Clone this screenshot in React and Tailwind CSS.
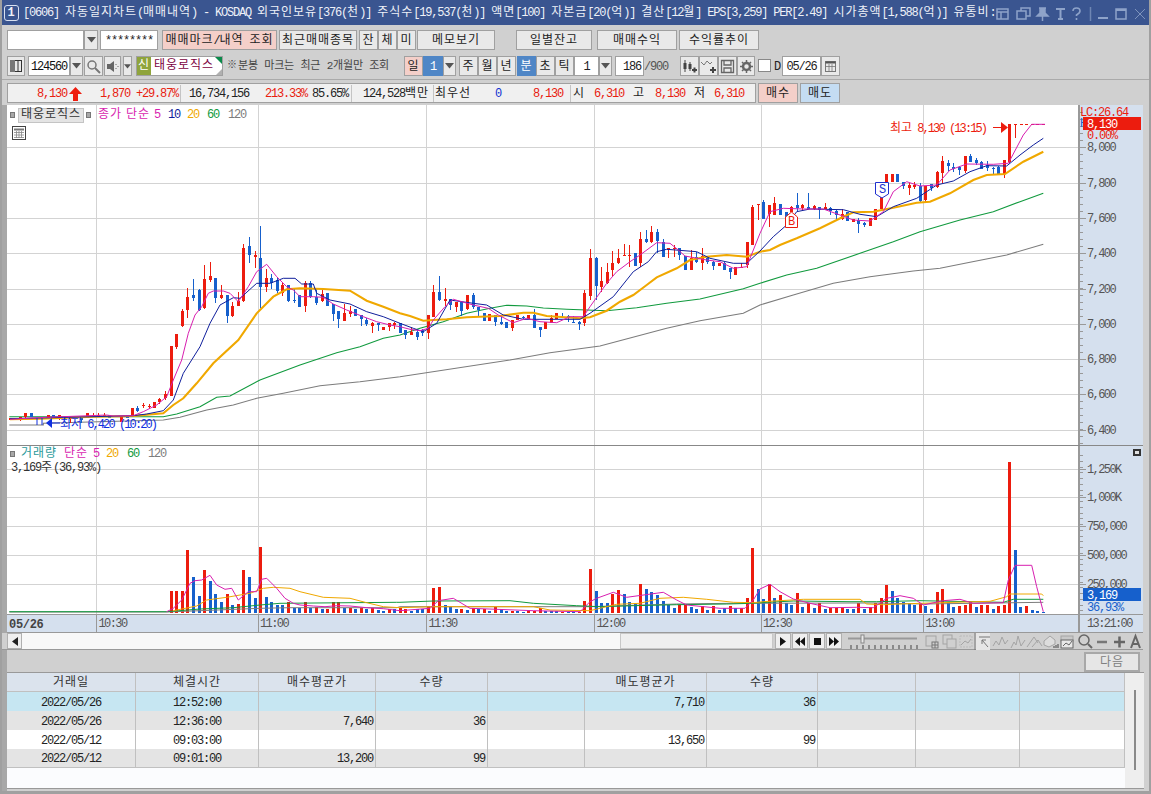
import React from "react";

const Txt = ({ children }) => (
  <>
    {String(children)
      .split(/([가-힣]+)/)
      .map((s, i) =>
        /[가-힣]/.test(s) ? (
          <span key={i}>{s}</span>
        ) : (
          <span key={i} className="tracking-[-1.2px]">{s}</span>
        )
      )}
  </>
);

const RED = "#ec1c0e";
const BLUE = "#1660cc";
const PINK = "#d81fb0";
const NAVY = "#101f9c";
const ORANGE = "#f0a800";
const GREEN = "#119a3e";
const GRAY = "#7c7c7c";

const z3 = (a) => a.map(([x, y]) => [x / 3, 130 + y / 3]);
const z4 = (a) => a.map(([x, y]) => [400 + x / 3, 200 + y / 3]);
const z5 = (a) => a.map(([x, y]) => [760 + x / 3, 105 + y / 3]);
const v6 = (a) => a.map(([x, y]) => [x / 3, 540 + y / 3]);
const v10 = (a) => a.map(([x, y]) => [400 + x / 3, 540 + y / 3]);
const v7 = (a) => a.map(([x, y]) => [760 + x / 3, 530 + y / 3]);
const pts = (a) => a.map(([x, y]) => `${x.toFixed(1)},${y.toFixed(1)}`).join(" ");

const pinkP = [...z3([[30,868],[140,862],[320,855],[340,858],[400,857],[430,845],[470,825],[500,800],[520,750],[545,690],[565,610],[585,555],[605,530],[625,490],[640,483],[670,483],[690,490],[715,515],[745,470],[770,425],[800,403],[830,440],[860,470],[880,480],[900,500],[940,500],[970,502],[1000,522],[1040,540],[1090,560],[1130,575],[1170,585]]),
  ...z4([[0,380],[30,388],[60,392],[85,385],[100,360],[135,320],[160,298],[185,305],[220,315],[265,325],[295,345],[340,368],[380,355],[420,365],[470,368],[510,350],[550,350],[570,320],[620,250],[650,215],[690,185],[720,165],[770,128],[810,130],[835,150],[855,168],[920,180],[960,185],[1000,205],[1040,200]]),
  ...z5([[0,385],[30,320],[70,310],[130,312],[190,312],[240,330],[280,345],[330,348],[370,320],[400,260],[440,230],[480,243],[530,240],[570,195],[620,177],[700,178],[745,175],[790,90],[815,58],[855,58]])];
const navyP = [...z3([[30,866],[400,857],[440,852],[490,842],[520,810],[550,730],[600,650],[630,580],[660,525],[700,503],[720,505],[770,460],[810,460],[850,445],[885,445],[905,462],[940,462],[950,490],[990,510],[1050,522],[1100,545],[1150,560]]),
  ...z4([[0,370],[40,385],[70,395],[110,370],[150,300],[220,310],[260,315],[310,345],[370,358],[450,358],[540,358],[570,340],[640,290],[700,215],[745,185],[770,155],[800,148],[890,155],[930,175],[1000,190],[1040,190]]),
  ...z5([[0,438],[40,395],[80,360],[110,320],[150,312],[250,314],[300,328],[350,335],[400,305],[470,280],[530,240],[580,228],[630,200],[680,182],[740,183],[780,150],[820,120],[850,100]])];
const orangeP = [...z3([[30,868],[120,866],[280,860],[400,858],[490,850],[520,825],[550,805],[590,760],[640,700],[715,630],[770,550],[820,500],[860,478],[900,475],[970,477],[1050,482],[1100,512],[1150,530]]),
  ...z4([[0,340],[30,348],[70,362],[100,360],[140,358],[200,352],[300,348],[370,338],[400,338],[440,348],[540,355],[570,352],[620,332],[660,305],[700,285],[740,255],[770,232],[830,205],[870,180],[920,170],[980,165],[1040,170]]),
  ...z5([[0,440],[30,435],[60,420],[110,400],[180,370],[250,335],[280,322],[340,320],[400,308],[470,293],[510,290],[570,265],[640,225],[680,210],[735,207],[790,170],[850,140]])];
const greenP = [...z3([[28,860],[490,860],[530,852],[600,830],[650,802],[690,798],[780,750],[900,705],[1010,668],[1080,650],[1150,625]]),
  ...z4([[0,405],[60,385],[130,365],[200,340],[270,325],[320,316],[380,318],[430,324],[500,328],[620,332],[710,323],[800,310],[900,297],[1030,266]]),
  ...z5([[0,535],[80,510],[170,490],[300,445],[400,410],[480,380],[600,345],[700,320],[780,290],[850,265]])];
const grayP = [...z3([[28,885],[130,885],[130,880],[490,870],[540,862],[620,840],[700,825],[770,805],[850,790],[960,767],[1080,755],[1200,740]]),
  ...z4([[330,480],[450,458],[600,438],[800,385],[900,362],[1030,340]]),
  ...z5([[0,600],[100,570],[220,535],[330,515],[460,498],[540,490],[630,472],[740,450],[850,418]])];

const c3 = [[30,"r",865,865,872,872],[45,"r",865,865,872,872],[60,"r",860,862,870,872],[76,"r",850,850,862,872],[94,"b",850,850,862,862],[143,"r",856,856,866,866],[160,"b",856,856,866,866],[178,"r",856,856,866,872],[193,"b",862,862,868,868],[210,"r",862,864,868,880],[243,"b",865,865,872,880],[262,"r",850,850,866,866],[278,"r",850,856,859,862],[295,"r",850,856,859,862],[313,"r",850,854,857,860],[328,"b",855,855,865,865],[362,"r",857,857,875,875],[380,"b",855,855,865,865],[397,"r",834,834,862,862],[412,"b",828,835,843,845],[430,"r",820,826,830,835],[446,"r",822,828,832,838],[463,"r",815,815,833,833],[478,"r",803,806,816,820],[496,"r",782,793,805,810],[513,"r",648,648,798,798],[529,"r",612,612,652,656],[547,"r",537,543,588,592],[562,"r",475,500,540,565],[580,"b",447,495,505,512],[598,"b",478,480,540,545],[613,"r",405,447,533,538],[631,"r",396,437,450,455],[646,"b",444,444,503,518],[664,"r",465,495,505,508],[682,"b",495,495,557,578],[697,"r",516,528,558,560],[715,"r",487,514,530,530],[730,"r",343,354,513,518],[748,"b",321,348,376,398],[766,"r",363,375,381,413],[781,"b",288,384,470,533],[799,"r",418,444,470,488],[814,"b",432,444,458,477],[832,"b",445,450,482,490],[847,"r",455,465,488,497],[865,"b",465,465,513,517],[883,"b",473,510,514,518],[898,"b",495,495,530,530],[916,"r",453,460,530,545],[931,"b",453,460,503,505],[949,"b",475,500,518,525],[967,"r",475,492,512,518],[982,"b",490,490,530,530],[1000,"b",522,522,552,572],[1015,"b",543,543,567,593],[1033,"r",522,549,572,572],[1051,"r",528,543,552,560],[1066,"b",538,538,558,558],[1084,"b",555,555,567,587],[1099,"b",565,570,582,590],[1117,"r",575,578,586,607],[1135,"b",578,580,587,603],[1150,"r",590,590,598,598],[1168,"r",578,580,592,602],[1183,"r",575,580,586,595]];
const c4 = [[0,"b",368,368,398,398],[15,"b",390,390,404,418],[33,"r",380,396,404,404],[51,"b",390,395,410,420],[67,"b",388,390,398,410],[85,"r",345,345,398,418],[100,"r",255,275,350,350],[118,"b",228,276,300,302],[136,"r",265,297,303,320],[151,"b",297,297,316,330],[169,"r",306,306,322,335],[184,"b",306,306,332,348],[202,"r",285,285,328,330],[220,"b",280,285,322,328],[235,"b",320,320,330,350],[253,"b",338,338,362,362],[268,"r",342,342,362,362],[286,"b",346,346,368,378],[304,"b",350,366,372,375],[319,"b",365,365,384,384],[337,"r",360,360,384,392],[352,"r",346,346,362,362],[370,"b",348,352,354,358],[385,"r",345,345,358,358],[403,"b",327,345,383,383],[421,"b",380,380,388,410],[436,"r",367,367,388,388],[454,"r",345,353,368,368],[469,"r",340,340,358,358],[487,"b",340,350,353,355],[505,"b",345,349,355,366],[520,"b",348,365,367,370],[538,"b",362,365,370,390],[553,"r",270,280,370,378],[571,"r",148,175,290,300],[589,"b",170,175,260,300],[604,"r",200,243,262,275],[622,"r",190,216,250,252],[637,"r",153,190,212,232],[655,"r",147,175,190,192],[673,"r",133,165,168,170],[688,"r",135,165,168,200],[706,"b",160,160,198,198],[721,"r",97,118,190,203],[739,"b",90,118,128,128],[754,"r",78,95,125,128],[772,"b",87,97,125,158],[790,"b",118,125,170,172],[805,"r",145,145,152,175],[823,"r",135,143,146,170],[838,"b",145,145,167,182],[856,"b",167,167,210,210],[874,"r",150,175,210,210],[889,"b",155,172,188,188],[907,"r",145,168,188,210],[922,"b",172,175,188,192],[940,"b",183,185,198,210],[958,"r",188,188,198,198],[973,"b",185,188,208,210],[991,"b",205,205,218,237],[1006,"r",202,202,225,225],[1024,"r",190,202,204,205],[1042,"r",127,127,197,204],[1057,"r",15,22,135,135],[1075,"r",12,12,15,60]];
const c5 = [[10,"b",285,290,340,340],[28,"r",300,300,328,365],[43,"r",277,293,328,328],[61,"b",297,297,330,330],[79,"b",320,320,335,335],[94,"r",303,305,320,325],[112,"b",265,300,310,320],[127,"r",297,300,310,317],[145,"b",265,307,312,312],[163,"r",300,302,310,315],[178,"b",305,305,313,342],[196,"r",293,305,310,312],[211,"b",307,310,320,330],[229,"b",315,318,330,345],[247,"r",313,327,342,345],[262,"b",322,322,350,350],[280,"r",342,342,350,350],[295,"b",340,345,358,385],[313,"b",350,355,362,365],[331,"r",338,338,362,362],[346,"r",312,312,345,345],[364,"r",275,275,310,310],[379,"r",207,207,270,270],[397,"r",207,207,232,232],[412,"b",207,207,232,232],[430,"b",230,232,245,250],[448,"r",233,240,250,268],[463,"r",230,240,245,250],[481,"b",233,243,288,290],[496,"r",243,243,285,292],[514,"b",237,237,250,258],[532,"r",198,200,245,250],[547,"r",152,168,205,232],[565,"b",165,175,183,197],[580,"b",173,185,190,200],[598,"b",183,187,197,210],[616,"r",153,153,198,205],[631,"b",147,152,170,172],[649,"b",158,165,173,178],[664,"b",167,170,190,192],[682,"b",168,180,190,197],[700,"b",185,190,193,205],[715,"b",182,185,208,208],[733,"r",165,165,207,218],[748,"r",57,57,172,175],[766,"r",57,57,59,98],[784,"r",57,57,59,59],[799,"r",57,57,59,59],[817,"r",57,57,59,59],[832,"r",57,57,59,59],[850,"r",57,57,59,59]];

const candles = [
  ...c3.map(([x, c, a, b, d, e]) => [x / 3, c, 130 + a / 3, 130 + b / 3, 130 + d / 3, 130 + e / 3]),
  ...c4.map(([x, c, a, b, d, e]) => [400 + x / 3, c, 200 + a / 3, 200 + b / 3, 200 + d / 3, 200 + e / 3]),
  ...c5.map(([x, c, a, b, d, e]) => [760 + x / 3, c, 105 + a / 3, 105 + b / 3, 105 + d / 3, 105 + e / 3]),
];

const vols = [
  ...[[513,"r",153],[529,"r",153],[547,"r",153],[562,"r",30],[580,"b",111],[598,"b",168],[613,"r",90],[631,"b",123],[646,"b",162],[664,"b",186],[682,"r",162],[697,"b",195],[715,"r",192],[730,"r",90],[748,"b",111],[766,"b",174],[781,"r",21],[799,"b",171],[814,"b",186],[832,"b",195],[847,"b",195],[865,"r",186],[883,"b",204],[898,"b",204],[916,"r",186],[931,"b",204],[949,"r",200],[967,"b",207],[982,"r",207],[1000,"r",186],[1015,"r",186],[1033,"b",204],[1051,"r",204],[1066,"b",207],[1084,"r",204],[1099,"b",207],[1117,"r",204],[1135,"b",210],[1150,"b",213],[1168,"r",208],[1183,"b",208]].map(([x, c, y]) => [x / 3, c, 540 + y / 3]),
  ...[[0,"r",205],[15,"r",207],[33,"b",213],[51,"b",208],[67,"b",208],[85,"r",198],[100,"r",144],[118,"r",141],[136,"b",195],[151,"b",200],[169,"b",207],[184,"r",207],[202,"b",210],[220,"r",203],[235,"b",208],[253,"r",208],[268,"b",212],[286,"r",202],[304,"b",208],[319,"b",213],[337,"r",212],[352,"b",212],[370,"b",215],[385,"r",210],[403,"r",212],[421,"r",203],[436,"b",212],[454,"b",212],[469,"b",212],[487,"r",215],[505,"b",215],[520,"b",215],[538,"r",215],[553,"r",183],[571,"r",87],[589,"b",153],[604,"b",189],[622,"b",189],[637,"r",162],[655,"r",150],[673,"b",162],[688,"b",186],[706,"b",192],[721,"r",132],[739,"b",147],[754,"b",156],[772,"b",165],[790,"b",183],[805,"b",195],[823,"b",204],[838,"r",195],[856,"r",192],[874,"b",200],[889,"b",207],[907,"r",198],[922,"b",210],[940,"r",198],[958,"b",210],[973,"b",205],[991,"r",198],[1006,"b",205],[1024,"r",204],[1042,"r",174],[1057,"r",24],[1075,"b",147]].map(([x, c, y]) => [400 + x / 3, c, 540 + y / 3]),
  ...[[10,"b",207],[28,"r",163],[43,"b",204],[61,"r",195],[79,"b",220],[94,"b",225],[112,"r",189],[127,"b",232],[145,"r",218],[163,"b",235],[178,"r",220],[196,"b",237],[211,"r",233],[229,"r",233],[247,"r",233],[262,"b",237],[280,"b",237],[295,"r",218],[313,"b",237],[331,"r",232],[346,"r",220],[364,"r",204],[379,"r",165],[397,"b",183],[412,"b",204],[430,"b",216],[448,"b",220],[463,"b",225],[481,"r",218],[496,"b",228],[514,"b",237],[532,"r",186],[547,"r",177],[565,"b",215],[580,"b",232],[598,"r",228],[616,"r",225],[631,"r",215],[649,"b",232],[664,"r",226],[682,"r",226],[700,"b",237],[715,"r",228],[733,"r",225],[748,"r",-204],[766,"b",60],[781,"b",232],[799,"r",228],[817,"b",240],[832,"b",243],[850,"b",246]].map(([x, c, y]) => [760 + x / 3, c, 530 + y / 3]),
];

const vPink = [...v6([[500,215],[520,205],[545,180],[570,130],[585,122],[605,120],[630,106],[650,135],[675,148],[695,145],[715,180],[745,155],[770,155],[785,118],[800,115],[830,145],[855,175],[880,190],[900,195],[940,198],[975,200],[1010,197],[1050,198],[1100,203],[1150,206]]),
  ...v10([[0,212],[90,205],[115,182],[160,175],[210,205],[400,212],[540,215],[570,185],[590,175],[640,157],[680,172],[790,157],[830,180],[860,195],[960,205],[1035,205],[1060,180]]),
  ...v7([[0,177],[30,163],[60,185],[100,207],[150,220],[210,233],[290,232],[340,233],[380,205],[420,197],[460,205],[490,225],[550,212],[600,208],[640,220],[730,218],[745,150],[765,106],[815,106],[830,170],[850,245]])];
const vOrange = [...v6([[520,212],[590,198],[620,180],[680,172],[750,160],[790,145],[820,142],[870,145],[900,155],[970,172],[1050,175],[1100,188],[1150,200]]),
  ...v10([[0,203],[100,200],[400,200],[450,210],[570,212],[650,193],[720,190],[780,175],[850,172],[920,178],[1000,187],[1060,188]]),
  ...v7([[10,215],[130,208],[300,208],[320,222],[370,224],[480,220],[690,214],[740,200],[750,192],[845,192],[850,197]])];
const vGreen = [...v6([[28,215],[500,215],[600,207],[700,203],[780,195],[840,190],[1190,187]]),
  ...v10([[0,187],[100,183],[330,182],[400,190],[530,197],[600,200],[700,197],[830,194],[980,192],[1060,190]]),
  ...v7([[0,218],[100,213],[270,215],[350,215],[480,212],[730,217],[760,208],[850,208]])];
const vGray = [...v6([[28,216],[500,216],[600,212],[780,205],[870,203],[1190,203]]),
  ...v10([[0,200],[570,200],[830,192],[1060,189]]),
  ...v7([[0,220],[270,219],[350,219],[490,222],[850,217]])];

const priceY = [147.3, 182.5, 218, 253.3, 288.5, 323.8, 359, 394.3, 429.5];
const priceL = ["8,000", "7,800", "7,600", "7,400", "7,200", "7,000", "6,800", "6,600", "6,400"];
const grid = [96.5, 258, 426.5, 594.5, 761, 923.5];
const volY = [469, 497, 526, 555, 584];
const volL = ["1,250K", "1,000K", "750,000", "500,000", "250,000"];
const MONO = "font-['Liberation_Mono','Noto_Sans_CJK_KR',monospace] text-[12px] tracking-[-1.2px]";
const AXIS = "font-['Liberation_Mono','Noto_Sans_CJK_KR',monospace] text-[12px] tracking-[-1.6px]";
const MARK = "font-['Liberation_Mono','Noto_Sans_CJK_KR',monospace] text-[12px] tracking-[-1.9px]";

function PricePane() {
  const minor = [];
  for (let y = 112; y < 445; y += 7.05) minor.push(y);
  return (
    <svg width="1136" height="340" viewBox="7 105 1136 340" className="block">
      <rect x="7" y="105" width="1136" height="340" fill="#ffffff" />
      <rect x="1078" y="105" width="65" height="340" fill="#d5e0ee" />
      <g shapeRendering="crispEdges" stroke="#d3d3d3">
        {priceY.map((y) => <line key={y} x1="7" x2="1078" y1={Math.round(y) + 0.5} y2={Math.round(y) + 0.5} />)}
        {grid.map((x) => <line key={x} x1={x} x2={x} y1="105" y2="445" />)}
      </g>
      <g shapeRendering="crispEdges" stroke="#999999">
        <line x1="1078.5" x2="1078.5" y1="105" y2="445" />
        <line x1="1079.5" x2="1079.5" y1="105" y2="445" />
        {minor.map((y) => <line key={y} x1="1079" x2="1083" y1={Math.round(y) + 0.5} y2={Math.round(y) + 0.5} />)}
        {priceY.map((y) => <line key={y} x1="1079" x2="1086" y1={Math.round(y) + 0.5} y2={Math.round(y) + 0.5} />)}
      </g>
      <polyline points={pts(grayP)} fill="none" stroke={GRAY} strokeWidth="1.1" />
      <polyline points={pts(greenP)} fill="none" stroke={GREEN} strokeWidth="1.1" />
      <g shapeRendering="crispEdges">
        {candles.map(([x, c, a, b, d, e], i) => {
          const px = Math.round(x);
          const col = c === "r" ? RED : BLUE;
          return (
            <g key={i} fill={col}>
              <rect x={px} y={Math.round(a)} width="1" height={Math.max(1, Math.round(e - a))} />
              <rect x={px - 1} y={Math.round(b)} width="3" height={Math.max(1, Math.round(d - b))} />
            </g>
          );
        })}
      </g>
      <polyline points={pts(orangeP)} fill="none" stroke={ORANGE} strokeWidth="2.1" />
      <polyline points={pts(navyP)} fill="none" stroke={NAVY} strokeWidth="1" />
      <polyline points={pts(pinkP)} fill="none" stroke={PINK} strokeWidth="1" />

      <text x="890" y="131.500" fill={RED} className={MARK}>
        <tspan className="tracking-[-0.1px]">최고</tspan>
        <tspan> 8,130 (13:15)</tspan>
      </text>
      <path d="M993 127.500H1002" stroke={RED} strokeWidth="1" />
      <path d="M1001 122L1008 127.500L1001 133Z" fill={RED} />

      <path d="M37 418V425M42 418V425" stroke="#1030e0" strokeWidth="1" />
      <path d="M46 423L52 418V428Z" fill="#1030e0" />
      <path d="M52 423H60" stroke="#1030e0" strokeWidth="1" />
      <text x="60" y="427.500" fill="#1030e0" className={MARK}>
        <tspan className="tracking-[-0.1px]">최저</tspan>
        <tspan> 6,420 (10:20)</tspan>
      </text>

      <path d="M785.5 227.5V217L791.5 212L797.5 217V227.5Z" fill="#ffffff" stroke={RED} />
      <text x="788" y="225" fill={RED} className={MONO}>B</text>
      <path d="M875.5 182.5H888.5V194L882 198L875.5 194Z" fill="#ffffff" stroke="#2030d0" />
      <text x="879" y="193" fill="#2030d0" className={MONO}>S</text>

      <g fill="#555555" className={AXIS}>
        {priceY.map((y, i) => <text key={y} x="1087" y={y + 4}>{priceL[i]}</text>)}
      </g>
      <text x="1080" y="116" fill={RED} className={MONO}>LC:26.64</text>
      <text x="1080" y="127" fill={BLUE} className={MONO}>H</text>
      <rect x="1083" y="117" width="58" height="13" fill={RED} shapeRendering="crispEdges" />
      <text x="1087" y="127.5" fill="#ffffff" className={MONO}>8,130</text>
      <text x="1087" y="139" fill={RED} className={MONO}>0.00%</text>
    </svg>
  );
}

function VolumePane() {
  const minor = [];
  for (let y = 455; y < 613; y += 5.75) minor.push(y);
  return (
    <svg width="1136" height="187" viewBox="7 446 1136 187" className="block">
      <rect x="7" y="446" width="1136" height="168" fill="#ffffff" />
      <rect x="1078" y="446" width="65" height="187" fill="#d5e0ee" />
      <rect x="7" y="614" width="1071" height="19" fill="#d5e0ee" />
      <g shapeRendering="crispEdges" stroke="#d3d3d3">
        {volY.map((y) => <line key={y} x1="7" x2="1078" y1={y + 0.5} y2={y + 0.5} />)}
        {grid.map((x) => <line key={x} x1={x} x2={x} y1="446" y2="614" />)}
      </g>
      <g shapeRendering="crispEdges">
        {vols.map(([x, c, y], i) => (
          <rect key={i} x={Math.round(x) - 1} y={Math.round(y)} width="3" height={Math.max(1, 613 - Math.round(y))} fill={c === "r" ? RED : BLUE} />
        ))}
      </g>
      <polyline points={pts(vGray)} fill="none" stroke={GRAY} strokeWidth="1" />
      <polyline points={pts(vGreen)} fill="none" stroke={GREEN} strokeWidth="1" />
      <polyline points={pts(vOrange)} fill="none" stroke={ORANGE} strokeWidth="1" />
      <polyline points={pts(vPink)} fill="none" stroke={PINK} strokeWidth="1" />
      <g shapeRendering="crispEdges" stroke="#999999">
        <line x1="1078.5" x2="1078.5" y1="446" y2="633" />
        <line x1="1079.5" x2="1079.5" y1="446" y2="633" />
        {minor.map((y) => <line key={y} x1="1079" x2="1083" y1={Math.round(y) + 0.5} y2={Math.round(y) + 0.5} />)}
        {volY.map((y) => <line key={y} x1="1079" x2="1086" y1={y + 0.5} y2={y + 0.5} />)}
        <line x1="7" x2="1143" y1="614.5" y2="614.5" />
        <line x1="7" x2="1143" y1="632.5" y2="632.5" />
        {grid.map((x) => <line key={x} x1={x} x2={x} y1="614" y2="632" />)}
      </g>
      <g fill="#555555" className={AXIS}>
        {volY.map((y, i) => <text key={y} x="1087" y={y + 4}>{volL[i]}</text>)}
        {["10:30", "11:00", "11:30", "12:00", "12:30", "13:00"].map((t, i) => (
          <text key={t} x={grid[i] + 2} y="627">{t}</text>
        ))}
        <text x="1087" y="627">13:21:00</text>
      </g>
      <text x="9" y="627.5" fill="#444444" fontWeight="700" className="font-['Liberation_Mono',monospace] text-[12px] tracking-[-0.3px]">05/26</text>
      <rect x="1083" y="588" width="58" height="13" fill={BLUE} shapeRendering="crispEdges" />
      <text x="1087" y="598.5" fill="#ffffff" className={MONO}>3,169</text>
      <text x="1087" y="611" fill={BLUE} className={MONO}>36,93%</text>
      <rect x="1133" y="449" width="8" height="7" fill="#333333" />
      <rect x="1135" y="451" width="4" height="3" fill="#e0e0e0" />
    </svg>
  );
}

function Btn({ className = "", bg = "bg-[#e9e9e9]", children }) {
  const isText = typeof children === "string";
  return (
    <div className={"h-full flex items-center justify-center border border-[#a0a0a0] text-[#222222] shrink-0 " + bg + " " + (isText ? "pt-[2px] " : "") + className}>
      {isText ? <span><Txt>{children}</Txt></span> : children}
    </div>
  );
}

const Caret = () => (
  <svg width="9" height="6" viewBox="0 0 9 6"><path d="M0 0H9L4.5 5.5Z" fill="#555555" /></svg>
);

const headers = ["거래일", "체결시간", "매수평균가", "수량", "", "매도평균가", "수량", "", "", ""];
const rows = [
  { bg: "bg-[#c6e6f2]", c: ["2022/05/26", "12:52:00", "", "", "", "7,710", "36", "", "", ""] },
  { bg: "bg-[#e4e4e4]", c: ["2022/05/26", "12:36:00", "7,640", "36", "", "", "", "", "", ""] },
  { bg: "bg-white", c: ["2022/05/12", "09:03:00", "", "", "", "13,650", "99", "", "", ""] },
  { bg: "bg-[#e4e4e4]", c: ["2022/05/12", "09:01:00", "13,200", "99", "", "", "", "", "", ""] },
];
const COLS = "grid grid-cols-[129px_123px_117px_112px_97px_122px_111px_98px_104px_105px]";

export default function App() {
  return (
    <div className="w-[1151px] h-[794px] overflow-hidden bg-[#d0d0d0] flex flex-col border-x-2 border-b-[3px] border-[#a0a0a0] font-['Liberation_Mono','Noto_Sans_CJK_KR',monospace] text-[12px] tracking-[0.96px] leading-none whitespace-pre text-[#222222]">
      {/* title bar */}
      <div className="h-[25px] -mx-[2px] bg-[#3a5590] flex items-center text-[#eef1f8] shrink-0">
        <div className="ml-[4px] w-[15px] h-[16px] border border-[#d8e0f0] rounded-[3px] flex items-center justify-center text-[12px] font-bold shrink-0">1</div>
        <div className="ml-[4px] w-[968px] shrink-0">
          <Txt>{"[0606] 자동일지차트(매매내역) - KOSDAQ 외국인보유[376(천)] 주식수[19,537(천)] 액면[100] 자본금[20(억)] 결산[12월] EPS[3,259] PER[2.49] 시가총액[1,588(억)] 유통비:"}</Txt>
        </div>
        <svg width="160" height="25" viewBox="991 0 160 25" className="shrink-0" fill="none" stroke="#8ea3c9" strokeWidth="1.5">
          <rect x="997" y="9" width="11" height="10" />
          <path d="M997 12H1008M1001 12V19" />
          <rect x="1021" y="8" width="9" height="8" />
          <rect x="1017" y="11" width="9" height="8" fill="#3a5590" />
          <path d="M1039 8H1046M1040 8V13L1037 16H1048L1045 13V8M1042.5 16V21" fill="#8ea3c9" />
          <path d="M1056 9H1065M1060.5 9V19M1058 19H1063" strokeWidth="2" />
          <path d="M1073 11Q1073 8 1076.5 8Q1080 8 1080 11Q1080 13 1076.5 15V16M1076.5 18V20" strokeWidth="1.6" />
          <path d="M1090.5 7V21" stroke="#6f86b3" />
          <path d="M1098 18H1108" strokeWidth="2" />
          <rect x="1116" y="9" width="10" height="10" />
          <path d="M1116 10H1126" strokeWidth="2" />
          <path d="M1135 9L1145 19M1145 9L1135 19" stroke="#7d93bd" strokeWidth="1" />
        </svg>
      </div>

      {/* toolbar 1 */}
      <div className="h-[20px] mt-[5px] pl-[5px] flex shrink-0">
        <div className="w-[77px] h-full bg-white border border-[#a0a0a0]" />
        <Btn className="w-[14px]"><Caret /></Btn>
        <div className="ml-[2px] w-[58px] h-full bg-white border border-[#a0a0a0] flex items-center justify-center pt-[2px]"><Txt>********</Txt></div>
        <Btn className="ml-[4px] w-[115px]" bg="bg-[#f4cfc9]">{"매매마크/내역 조회"}</Btn>
        <Btn className="ml-[2px] w-[78px]">최근매매종목</Btn>
        <Btn className="ml-[2px] w-[19px]">잔</Btn>
        <Btn className="w-[19px]">체</Btn>
        <Btn className="w-[19px]">미</Btn>
        <Btn className="ml-[1px] w-[78px]">메모보기</Btn>
        <Btn className="ml-[21px] w-[76px]">일별잔고</Btn>
        <Btn className="ml-[5px] w-[80px]">매매수익</Btn>
        <Btn className="ml-[2px] w-[80px]">수익률추이</Btn>
      </div>

      {/* toolbar 2 */}
      <div className="h-[20px] mt-[6px] pl-[5px] flex shrink-0">
        <Btn className="w-[18px]">
          <svg width="14" height="14" viewBox="0 0 14 14" fill="none" stroke="#333333">
            <rect x="1.5" y="1.5" width="11" height="11" />
            <rect x="1" y="1" width="5" height="12" fill="#777777" stroke="none" />
            <path d="M9 1.5V12.5" />
          </svg>
        </Btn>
        <div className="ml-[3px] w-[42px] h-full bg-white border border-[#a0a0a0] flex items-center justify-center pt-[1px] text-[#111111]"><Txt>124560</Txt></div>
        <Btn className="w-[13px]"><Caret /></Btn>
        <Btn className="ml-[1px] w-[19px]">
          <svg width="15" height="15" viewBox="0 0 15 15" fill="none" stroke="#777777" strokeWidth="1.5">
            <circle cx="6" cy="6" r="4" />
            <path d="M9 9L14 14" strokeWidth="2" />
          </svg>
        </Btn>
        <Btn className="ml-[1px] w-[17px]">
          <svg width="14" height="13" viewBox="0 0 14 13">
            <path d="M1 4H4L8 1V12L4 9H1Z" fill="#666666" />
            <path d="M10 4V5M10 8V9M12 6V7" stroke="#666666" />
          </svg>
        </Btn>
        <Btn className="ml-[2px] w-[9px]"><svg width="7" height="5" viewBox="0 0 9 6"><path d="M0 0H9L4.5 5.5Z" fill="#555555" /></svg></Btn>
        <div className="ml-[4px] w-[87px] h-full relative bg-white border border-[#a0a0a0] flex items-center overflow-hidden">
          <div className="w-[14px] h-full bg-[#8fa43c] text-white flex items-center justify-center">신</div>
          <div className="ml-[3px] text-[#7c0040]">태웅로직스</div>
          <svg width="86" height="19" viewBox="0 0 86 19" className="absolute left-0 top-0">
            <path d="M78 0H86V8Z" fill="#0a8a4a" />
            <path d="M86 11V19H78Z" fill="#b0b0b0" />
          </svg>
        </div>
        <div className="ml-[4px] w-[177px] flex items-center text-[#444444] text-[11px] tracking-[-0.2px]">
          <span className="text-[10px] tracking-[-1px]">※</span>
          <span className="ml-[2px]">분봉 마크는 최근 2개월만 조회</span>
        </div>
        <Btn className="w-[19px]" bg="bg-[#f4cfc9]">일</Btn>
        <div className="w-[20px] h-full bg-[#4f86c6] text-white flex items-center justify-center pt-[1px]"><Txt>1</Txt></div>
        <Btn className="w-[13px]"><Caret /></Btn>
        <Btn className="ml-[3px] w-[19px]">주</Btn>
        <Btn className="w-[19px]">월</Btn>
        <Btn className="w-[19px]">년</Btn>
        <div className="ml-[1px] w-[19px] h-full bg-[#4f86c6] text-white flex items-center justify-center pt-[2px]">분</div>
        <Btn className="w-[19px]">초</Btn>
        <Btn className="w-[19px]">틱</Btn>
        <div className="w-[25px] h-full bg-white border border-[#a0a0a0] flex items-center justify-center pt-[1px]"><Txt>1</Txt></div>
        <Btn className="w-[13px]"><Caret /></Btn>
        <div className="ml-[3px] w-[29px] h-full bg-white border border-[#a0a0a0] flex items-center justify-end pr-[2px] pt-[1px]"><Txt>186</Txt></div>
        <div className="w-[36px] flex items-center text-[#555555] pt-[1px]"><Txt>/900</Txt></div>
        <Btn className="w-[19px]">
          <svg width="15" height="15" viewBox="0 0 15 15">
            <path d="M3 1V13M8 3V12" stroke="#444444" />
            <rect x="1.5" y="4" width="3" height="6" fill="#444444" />
            <rect x="6.5" y="5" width="3" height="5" fill="#444444" />
            <path d="M10 11H15M12.5 8.500V13.500" stroke="#444444" strokeWidth="2" />
          </svg>
        </Btn>
        <Btn className="w-[19px]">
          <svg width="15" height="15" viewBox="0 0 15 15" fill="none" stroke="#777777">
            <path d="M0 3L3 6L6 2L9 5L11 3" />
            <path d="M9 11H15M12 8V14" stroke="#444444" strokeWidth="2" />
          </svg>
        </Btn>
        <Btn className="w-[19px]">
          <svg width="15" height="15" viewBox="0 0 15 15" fill="none" stroke="#666666" strokeWidth="1.3">
            <path d="M1.500 1.500H13.500V13.500H1.500Z" />
            <path d="M4 1.500V6H11V1.500M4 13.500V9H11V13.500" />
          </svg>
        </Btn>
        <Btn className="w-[18px]">
          <svg width="15" height="15" viewBox="0 0 15 15">
            <circle cx="7.5" cy="7.5" r="3.5" fill="none" stroke="#666666" strokeWidth="2.500" />
            <path d="M7.500 1V14M1 7.500H14M3 3L12 12M12 3L3 12" stroke="#666666" strokeWidth="1.500" strokeDasharray="2.500 8" />
          </svg>
        </Btn>
        <div className="ml-[3px] mt-[3px] w-[13px] h-[13px] bg-white border border-[#888888]" />
        <div className="ml-[3px] w-[8px] flex items-center pt-[1px]"><Txt>D</Txt></div>
        <div className="w-[39px] h-full bg-white border border-[#a0a0a0] flex items-center justify-center pt-[1px]"><Txt>05/26</Txt></div>
        <Btn className="w-[19px]">
          <svg width="13" height="13" viewBox="0 0 13 13" fill="none" stroke="#777777">
            <rect x="1.500" y="1.500" width="10" height="10" />
            <path d="M1.500 2.500H11.500" strokeWidth="2" stroke="#555555" />
            <path d="M1.500 6.500H11.500M5 4V11.500M8 4V11.500" strokeWidth="0.800" />
          </svg>
        </Btn>
      </div>

      <div className="h-px mt-[3px] bg-[#aaaaaa] shrink-0" />

      {/* quote row */}
      <div className="h-[20px] mt-[3px] pl-[5px] flex shrink-0">
        <div className="w-[749px] h-full bg-[#f0f0f0] border border-[#a0a0a0] flex items-center pt-[1px] text-[#e8200f]">
          <span className="w-[59px] text-right"><Txt>8,130</Txt></span>
          <svg width="13" height="14" viewBox="0 0 13 14" className="ml-[2px]"><path d="M6.500 0L13 7H9V14H4V7H0Z" fill="#ee1c0e" /></svg>
          <span className="w-[48px] text-right"><Txt>1,870</Txt></span>
          <span className="w-[48px] text-right"><Txt>+29.87%</Txt></span>
          <span className="ml-[2px] h-full border-l border-[#c4c4c4]" />
          <span className="w-[68px] text-right text-[#222222]"><Txt>16,734,156</Txt></span>
          <span className="w-[58px] text-right"><Txt>213.33%</Txt></span>
          <span className="w-[41px] text-right text-[#222222]"><Txt>85.65%</Txt></span>
          <span className="ml-[3px] h-full border-l border-[#c4c4c4]" />
          <span className="w-[77px] text-right text-[#222222]"><Txt>124,528백만</Txt></span>
          <span className="ml-[4px] h-full border-l border-[#c4c4c4]" />
          <span className="ml-[1px] w-[36px] text-[#222222]">최우선</span>
          <span className="w-[30px] text-right text-[#1030d0]"><Txt>0</Txt></span>
          <span className="w-[62px] text-right"><Txt>8,130</Txt></span>
          <span className="ml-[7px] h-full border-l border-[#c4c4c4]" />
          <span className="ml-[2px] w-[12px] text-[#222222]">시</span>
          <span className="w-[39px] text-right"><Txt>6,310</Txt></span>
          <span className="ml-[9px] w-[12px] text-[#222222]">고</span>
          <span className="w-[40px] text-right"><Txt>8,130</Txt></span>
          <span className="ml-[9px] w-[12px] text-[#222222]">저</span>
          <span className="w-[38px] text-right"><Txt>6,310</Txt></span>
        </div>
        <Btn className="ml-[2px] w-[40px]" bg="bg-[#f4cfc9]">매수</Btn>
        <Btn className="ml-[2px] w-[40px]" bg="bg-[#c4dcf2]">매도</Btn>
      </div>

      {/* chart block */}
      <div className="mt-[2px] border-l-[5px] border-[#a8a8a8] shrink-0 w-[1141px] relative">
        <PricePane />
        <div className="h-px bg-[#888888]" />
        <VolumePane />

        {/* price legend */}
        <div className="absolute left-[3px] top-[3px] flex items-center h-[14px]">
          <span className="w-[5px] h-[6px] bg-[#a8a8a8] border border-[#777777]" />
          <span className="ml-[3px] w-[66px] h-[15px] bg-[#e4e4e4] border border-[#c4c4c4] flex items-center justify-center text-[#333333]">태웅로직스</span>
          <span className="ml-[2px] w-[5px] h-[6px] bg-[#a8a8a8] border border-[#777777]" />
          <span className="ml-[7px] text-[#d81fb0]">종가</span>
          <span className="ml-[4px] text-[#d81fb0]">단순</span>
          <span className="ml-[4px] text-[#d81fb0]"><Txt>5</Txt></span>
          <span className="ml-[8px] text-[#101f9c]"><Txt>10</Txt></span>
          <span className="ml-[7px] text-[#f0a800]"><Txt>20</Txt></span>
          <span className="ml-[8px] text-[#119a3e]"><Txt>60</Txt></span>
          <span className="ml-[9px] text-[#7c7c7c]"><Txt>120</Txt></span>
        </div>
        <svg width="14" height="14" viewBox="0 0 14 14" className="absolute left-[5px] top-[21px]" fill="none" stroke="#444444">
          <rect x="0.500" y="0.500" width="13" height="13" />
          <path d="M2 3.500H12" strokeWidth="2" stroke="#777777" />
          <path d="M2 6.500H12M2 9H12M2 11.500H12M4.500 5V12M7 5V12M9.500 5V12" stroke="#888888" strokeWidth="0.800" />
        </svg>

        {/* volume legend */}
        <div className="absolute left-[3px] top-[342px] flex items-center h-[14px]">
          <span className="w-[5px] h-[6px] bg-[#a8a8a8] border border-[#777777]" />
          <span className="ml-[6px] text-[#2a9a9a]">거래량</span>
          <span className="ml-[7px] text-[#d81fb0]">단순</span>
          <span className="ml-[5px] text-[#d81fb0]"><Txt>5</Txt></span>
          <span className="ml-[7px] text-[#f0a800]"><Txt>20</Txt></span>
          <span className="ml-[9px] text-[#119a3e]"><Txt>60</Txt></span>
          <span className="ml-[9px] text-[#7c7c7c]"><Txt>120</Txt></span>
        </div>
        <div className="absolute left-[4px] top-[357px] text-[#333333]"><Txt>3,169주(36,93%)</Txt></div>
      </div>

      {/* scroll + tools row */}
      <div className="h-[17px] pl-[5px] flex shrink-0 w-[1141px] border-b border-[#999999]">
        <div className="w-[15px] h-full bg-[#efefef] border border-[#b0b0b0] flex items-center justify-center">
          <svg width="6" height="9" viewBox="0 0 6 9"><path d="M6 0V9L0 4.500Z" fill="#222222" /></svg>
        </div>
        <div className="w-[598px] h-full bg-[#f8f8f8]" />
        <div className="w-[153px] h-full bg-[#efefef] border border-[#c8c8c8]" />
        <div className="ml-[2px] w-[16px] h-full bg-[#efefef] border border-[#b0b0b0] flex items-center justify-center">
          <svg width="6" height="9" viewBox="0 0 6 9"><path d="M0 0V9L6 4.500Z" fill="#111111" /></svg>
        </div>
        <div className="ml-px w-[16px] h-full bg-[#efefef] border border-[#b0b0b0] flex items-center justify-center">
          <svg width="10" height="9" viewBox="0 0 10 9"><path d="M5 0V9L0 4.500ZM10 0V9L5 4.500Z" fill="#111111" /></svg>
        </div>
        <div className="ml-px w-[16px] h-full bg-[#efefef] border border-[#b0b0b0] flex items-center justify-center">
          <span className="w-[7px] h-[7px] bg-[#111111]" />
        </div>
        <div className="ml-px w-[16px] h-full bg-[#efefef] border border-[#b0b0b0] flex items-center justify-center">
          <svg width="10" height="9" viewBox="0 0 10 9"><path d="M0 0V9L5 4.500ZM5 0V9L10 4.500Z" fill="#111111" /></svg>
        </div>
        <svg width="301" height="17" viewBox="842 633 301 17" className="shrink-0" fill="none" stroke="#a4a4a4">
          <path d="M848 638.500H917" strokeWidth="2" stroke="#999999" />
          <rect x="861" y="635" width="3" height="8" fill="#e8e8e8" stroke="#888888" />
          <path d="M851 645V649M857 645V649M863 645V649M869 645V649M875 645V649M881 645V649M887 645V649M893 645V649M899 645V649M905 645V649M911 645V649M917 645V649" stroke="#444444" />
          <rect x="926" y="636" width="10" height="10" />
          <rect x="932" y="642" width="6" height="6" fill="#d0d0d0" stroke="#777777" />
          <path d="M932 645H938M935 642V648" stroke="#777777" />
          <rect x="943" y="635" width="9" height="9" />
          <rect x="947" y="639" width="9" height="9" fill="#d0d0d0" />
          <rect x="960" y="636" width="12" height="11" strokeDasharray="2 1" stroke="#bbbbbb" />
          <path d="M961 645L965 641L968 643L971 639" />
          <path d="M975 633V650" stroke="#777777" />
          <rect x="976" y="633" width="14" height="17" fill="#e6e6e6" stroke="none" />
          <path d="M979 637H990M982 640L988 647M982 640V644M982 640H986" stroke="#777777" />
          <path d="M993 646L996 641L999 645L1002 637L1005 644L1008 640" />
          <path d="M1011 648L1014 642L1016 645L1018 636L1021 646L1025 640" />
          <path d="M1027 647L1034 637L1038 643M1032 647L1038 640L1042 646" />
          <path d="M1044 641L1050 636L1055 640V644L1049 647L1044 645Z" fill="#dddddd" />
          <path d="M1054 646V648M1056 645V648M1058 644V648" stroke="#444444" />
          <rect x="1061" y="636" width="12" height="5" fill="#c8c8c8" />
          <rect x="1061" y="640" width="12" height="8" fill="#e8e8e8" stroke="#666666" />
          <path d="M1063 646L1066 643L1069 645L1072 641" stroke="#666666" />
          <circle cx="1084" cy="640" r="5" strokeWidth="1.500" stroke="#666666" />
          <path d="M1088 644L1092 648" strokeWidth="2" stroke="#666666" />
          <path d="M1097 642H1107" strokeWidth="2.500" stroke="#777777" />
          <path d="M1114 642H1125M1119.500 636.500V647.500" strokeWidth="2.500" stroke="#666666" />
          <path d="M1131 648L1135.500 636L1140 648M1133 644H1138" strokeWidth="2" stroke="#666666" />
        </svg>
      </div>

      {/* bottom panel */}
      <div className="relative flex-1 flex flex-col border-l-[5px] border-[#a8a8a8] w-[1142px]">
        <div className="h-[22px] shrink-0 flex items-start justify-end pr-[4px] pt-[2px]">
          <div className="w-[56px] h-[20px] border-2 border-[#a8a8a8] bg-[#e6e6e6] flex items-center justify-center pt-[1px] text-[#808080]">다음</div>
        </div>
        <div className="flex-1 border-y border-[#999999] bg-[#fbfcfe] flex mb-[2px]">
          <div>
            <div className={COLS + " h-[19px] bg-[#dbe3ed] border-b border-[#c0c0c0]"}>
              {headers.map((h, i) => (
                <div key={i} className="border-r border-[#c0c0c0] flex items-center justify-center pt-[2px] text-[#333333]">{h}</div>
              ))}
            </div>
            {rows.map((r, k) => (
              <div key={k} className={COLS + " h-[19px] " + r.bg + (k === 3 ? " border-b border-[#c0c0c0]" : "")}>
                {r.c.map((t, i) => (
                  <div key={i} className={"border-r border-[#c0c0c0] flex items-center px-[2px] pt-[2px] text-[#222222] " + (i < 2 ? "justify-center" : "justify-end")}>
                    <Txt>{t}</Txt>
                  </div>
                ))}
              </div>
            ))}
          </div>
          <div className="w-[20px] bg-[#eeeeee] flex justify-center pt-[17px]">
            <div className="w-[2px] h-[80px] bg-[#8a8a8a]" />
          </div>
        </div>
      </div>
    </div>
  );
}
